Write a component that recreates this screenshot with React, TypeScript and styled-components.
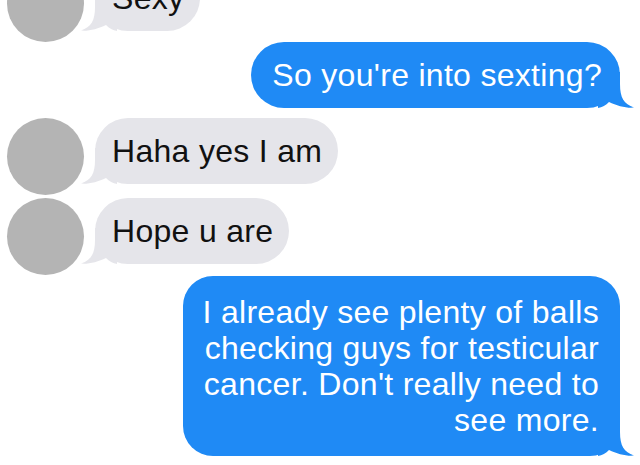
import React from "react";
import styled, { createGlobalStyle } from "styled-components";

type Side = "me" | "them";

const BLUE = "#1f8af5";
const GREY = "#e5e5ea";

const GlobalStyle = createGlobalStyle`
  html, body {
    margin: 0;
    padding: 0;
    background: #ffffff;
    overflow: hidden;
  }
  body {
    font-family: "Liberation Sans", Arial, sans-serif;
  }
`;

const Screen = styled.div`
  width: 640px;
  height: 465px;
  overflow: hidden;
  background: #ffffff;
`;

const Thread = styled.div`
  display: flex;
  flex-direction: column;
  margin-top: -35px;
`;

const Row = styled.div<{ $side: Side; $gap: number }>`
  display: flex;
  align-items: flex-start;
  justify-content: ${(p) => (p.$side === "me" ? "flex-end" : "flex-start")};
  gap: 11px;
  margin-top: ${(p) => p.$gap}px;
  padding: ${(p) => (p.$side === "me" ? "0 20px 0 0" : "0 0 0 7px")};
`;

const Avatar = styled.div`
  width: 77px;
  height: 77px;
  flex: none;
  border-radius: 50%;
  background: #b4b4b4;
`;

const Bubble = styled.div<{ $side: Side; $radius: number }>`
  position: relative;
  padding: ${(p) => (p.$side === "me" ? "15px 18px 15px 21px" : "15px 16px 15px 17px")};
  border-radius: ${(p) => p.$radius}px;
  background: ${(p) => (p.$side === "me" ? BLUE : GREY)};
  color: ${(p) => (p.$side === "me" ? "#ffffff" : "#111111")};
  font-size: 32px;
  letter-spacing: 0.3px;
  line-height: 36px;
  white-space: nowrap;
  text-align: ${(p) => (p.$side === "me" ? "right" : "left")};
`;

const Long = styled(Bubble)`
  padding: 18px 21px 18px 20px;
`;

const Text = styled.span`
  position: relative;
  z-index: 1;
`;

const TailSvg = styled.svg<{ $side: Side }>`
  position: absolute;
  z-index: 0;
  bottom: 0;
  width: 36px;
  height: 36px;
  ${(p) =>
    p.$side === "me"
      ? "right: -14px;"
      : "left: -14px; transform: scaleX(-1);"}
`;

function Tail({ side }: { side: Side }) {
  return (
    <TailSvg $side={side} viewBox="0 0 36 36">
      <path
        d="M0 0 H22 V12 C22 26 26 32 36 35.6 C29 36.4 19 34 11 30 C8 33 4 35.6 0 36 Z"
        fill={side === "me" ? BLUE : GREY}
      />
    </TailSvg>
  );
}

function Incoming({ text, gap }: { text: string; gap: number }) {
  return (
    <Row $side="them" $gap={gap}>
      <Avatar />
      <Bubble $side="them" $radius={33}>
        <Tail side="them" />
        <Text>{text}</Text>
      </Bubble>
    </Row>
  );
}

export default function App() {
  return (
    <Screen>
      <GlobalStyle />
      <Thread>
        <Incoming text="Sexy" gap={0} />
        <Row $side="me" $gap={0}>
          <Bubble $side="me" $radius={33}>
            <Tail side="me" />
            <Text>So you're into sexting?</Text>
          </Bubble>
        </Row>
        <Incoming text="Haha yes I am" gap={10} />
        <Incoming text="Hope u are" gap={3} />
        <Row $side="me" $gap={1}>
          <Long $side="me" $radius={30}>
            <Tail side="me" />
            <Text>
              I already see plenty of balls
              <br />
              checking guys for testicular
              <br />
              cancer. Don't really need to
              <br />
              see more.
            </Text>
          </Long>
        </Row>
      </Thread>
    </Screen>
  );
}
